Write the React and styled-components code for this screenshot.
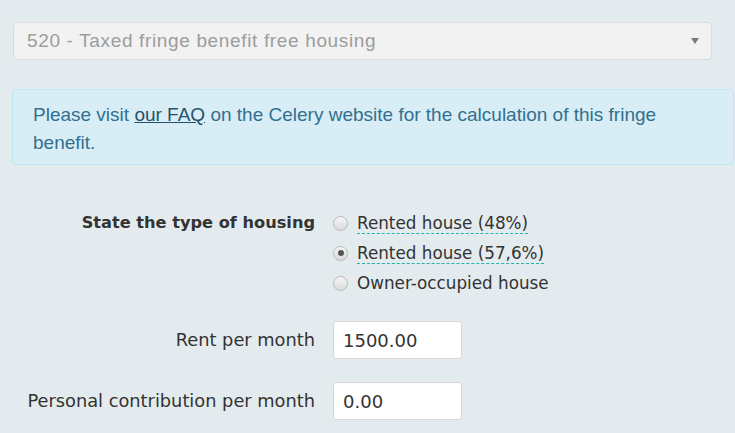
import React from 'react';
import styled, { createGlobalStyle } from 'styled-components';

const GlobalStyle = createGlobalStyle`
  html, body {
    margin: 0;
    padding: 0;
    background: #e3ebee;
  }
  body {
    font-family: "DejaVu Sans", Verdana, sans-serif;
    color: #333;
  }
`;

const Page = styled.div`
  padding: 22px 0 0 12px;
  width: 723px;
  overflow: hidden;
`;

const SelectBox = styled.div`
  margin-left: 1px;
  width: 699px;
  height: 38px;
  box-sizing: border-box;
  background: #f2f2f2;
  border: 1px solid #dcdcdc;
  border-radius: 4px;
  display: flex;
  align-items: center;
  justify-content: space-between;
  padding: 0 14px 0 13px;
  font-family: "Liberation Sans", Arial, sans-serif;
  font-size: 19px;
  letter-spacing: 0.65px;
  color: #9c9c9c;
`;

const Caret = styled.span`
  width: 0;
  height: 0;
  border-left: 4px solid transparent;
  border-right: 4px solid transparent;
  border-top: 6px solid #7a7a7a;
  margin-right: -2px;
`;

const Alert = styled.div`
  margin-top: 29px;
  box-sizing: border-box;
  width: 722px;
  height: 76px;
  background: #d9edf7;
  border: 1px solid #bce8f1;
  border-radius: 4px;
  padding: 11px 20px;
  font-family: "Liberation Sans", Arial, sans-serif;
  font-size: 19px;
  line-height: 28px;
  color: #31708f;
`;

const AlertLink = styled.a`
  color: #245269;
  text-decoration: underline;
`;

const Form = styled.div`
  margin-top: 43px;
  display: grid;
  grid-template-columns: 303px 1fr;
  column-gap: 18px;
  row-gap: 23px;
  align-items: start;
`;

const Label = styled.div`
  text-align: right;
  font-size: ${p => (p.$bold ? '16.2px' : '17.8px')};
  font-weight: ${p => (p.$bold ? 700 : 400)};
  line-height: ${p => (p.$bold ? '30px' : '38px')};
  color: #333;
`;

const RadioGroup = styled.div`
  display: flex;
  flex-direction: column;
`;

const RadioRow = styled.label`
  display: flex;
  align-items: center;
  height: 30px;
  font-size: 16.8px;
  color: #333;
`;

const RadioDot = styled.span`
  width: 15px;
  height: 15px;
  box-sizing: border-box;
  border-radius: 50%;
  border: 1px solid #b9b9b9;
  background: linear-gradient(#f6f6f6, #dadada);
  margin: 0 9px 0 0;
  display: flex;
  align-items: center;
  justify-content: center;
  &::after {
    content: '';
    width: 6px;
    height: 6px;
    border-radius: 50%;
    background: ${p => (p.$checked ? '#555' : 'transparent')};
  }
`;

const RadioText = styled.span`
  border-bottom: ${p => (p.$hint ? '1px dashed #1fb5a8' : '1px solid transparent')};
  line-height: 20px;
`;

const Input = styled.div`
  width: 129px;
  height: 38px;
  box-sizing: border-box;
  background: #fff;
  border: 1px solid #d6d6d6;
  border-radius: 3px;
  display: flex;
  align-items: center;
  padding: 0 9px;
  font-size: 18px;
  color: #333;
`;

const radios = [
  { text: 'Rented house (48%)', hint: true },
  { text: 'Rented house (57,6%)', hint: true, checked: true },
  { text: 'Owner-occupied house' },
];

export default function App() {
  return (
    <>
      <GlobalStyle />
      <Page>
        <SelectBox>
          <span>520 - Taxed fringe benefit free housing</span>
          <Caret />
        </SelectBox>
        <Alert>
          Please visit <AlertLink href="#">our FAQ</AlertLink> on the Celery website for the calculation of this fringe benefit.
        </Alert>
        <Form>
          <Label $bold>State the type of housing</Label>
          <RadioGroup>
            {radios.map(r => (
              <RadioRow key={r.text}>
                <RadioDot $checked={r.checked} />
                <RadioText $hint={r.hint}>{r.text}</RadioText>
              </RadioRow>
            ))}
          </RadioGroup>
          <Label>Rent per month</Label>
          <Input>1500.00</Input>
          <Label>Personal contribution per month</Label>
          <Input>0.00</Input>
        </Form>
      </Page>
    </>
  );
}
